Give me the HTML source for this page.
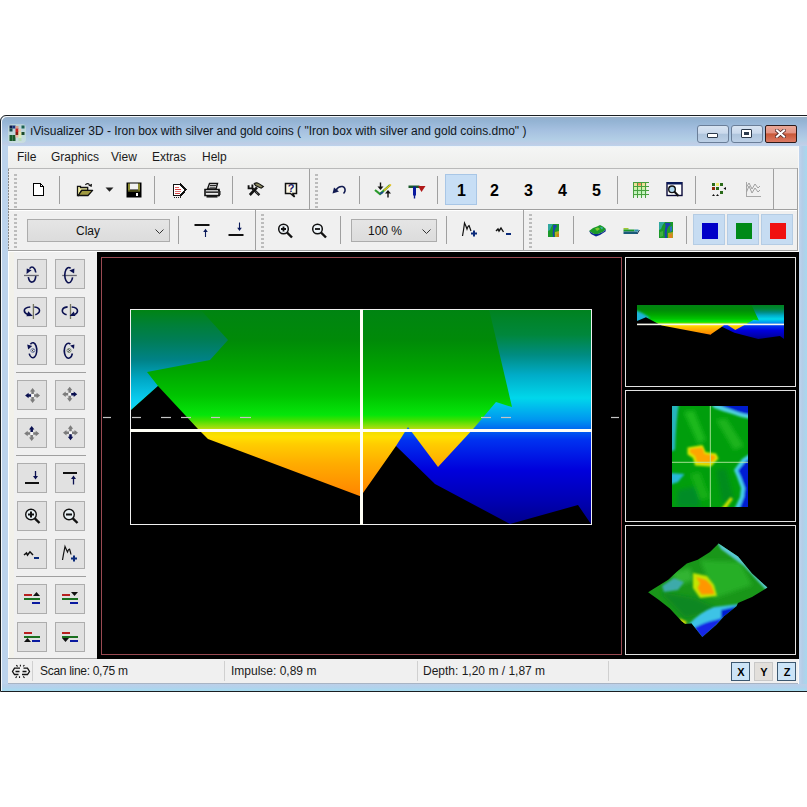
<!DOCTYPE html>
<html><head><meta charset="utf-8">
<style>
*{margin:0;padding:0;box-sizing:border-box}
html,body{width:807px;height:807px;overflow:hidden;background:#fff;font-family:"Liberation Sans",sans-serif;color:#000}
.a{position:absolute}
#win{left:0;top:115px;width:814px;height:577px;border:1px solid #1a1e22;box-shadow:inset 1px 1px 0 #f4f8fc;border-radius:6px 6px 0 0;
 background:linear-gradient(#e8f4f8 0px,#98aec4 1px,#95b2d0 3px,#93b3d3 5px,#a5c0e0 14px,#b3cfe6 24px,#bfcde6 28px,#bcd3ec 30px,#bcd3ec 100%)}
#title{left:30px;top:124px;font-size:12px;color:#101820;white-space:nowrap;letter-spacing:-0.015px}
#client{left:8px;top:146px;width:790px;height:537px;background:#f0f0f0}
.menu{top:150px;font-size:12px;color:#1a1a1a}
.sep{width:1px;background:#a0a0a0}
.tbtxt{font-weight:bold;font-size:16px}
.lb{width:30px;height:30px;border:1px solid #adadad;background:#e1e1e1}
.hsep{height:1px;background:#a0a0a0}
.stat{top:664px;font-size:12px;color:#1a1a1a;white-space:nowrap}
.grip{width:3px;background:repeating-linear-gradient(#bcbcbc 0 2px,transparent 2px 4px)}
</style></head><body>
<div id="win" class="a"></div>

<!-- app icon -->
<svg class="a" style="left:0;top:0" width="30" height="146" viewBox="0 0 30 146">
<rect x="8" y="124" width="18" height="19" rx="4" fill="#d8ecd8" opacity="0.5"/>
<rect x="9.5" y="125.5" width="3" height="3" fill="#0a1848"/><rect x="12.5" y="125.5" width="3" height="3" fill="#18307a"/><rect x="15.5" y="126" width="3" height="2.5" fill="#d8a090"/><rect x="21.5" y="125.5" width="3" height="3" fill="#1a6050"/>
<rect x="9.5" y="128.5" width="3" height="3" fill="#1a4a4a"/><rect x="15.5" y="128.5" width="3" height="3.5" fill="#c82020"/><rect x="18.5" y="129" width="2.5" height="2.5" fill="#e8c8a8"/>
<rect x="15.5" y="132" width="3" height="3" fill="#8a1a10"/><rect x="18.5" y="132" width="3" height="3" fill="#eae4a8"/><rect x="21.5" y="132" width="3" height="3" fill="#1a4a2a"/>
<rect x="9.5" y="135" width="3" height="3" fill="#1a5a2a"/><rect x="12.5" y="135" width="3" height="3" fill="#1a5a2a"/><rect x="15.5" y="135" width="3" height="2.5" fill="#e8b8a8"/><rect x="18.5" y="135" width="3" height="3" fill="#d8ecb8"/>
<rect x="9.5" y="138" width="3" height="3" fill="#1a5a2a"/><rect x="12.5" y="138" width="3" height="3" fill="#1a5a2a"/><rect x="18.5" y="138" width="3" height="3" fill="#b8dcb8"/>
</svg>
<div id="title" class="a">ıVisualizer 3D - Iron box with silver and gold coins ( "Iron box with silver and gold coins.dmo" )</div>
<!-- caption buttons -->
<div class="a" style="left:697px;top:125px;width:32px;height:18px;border:1px solid #6a7e98;border-radius:3px;background:linear-gradient(#d8e4f2 0,#cad9ec 45%,#aec4dc 52%,#bcd0e6 100%)"></div>
<div class="a" style="left:707px;top:133px;width:11px;height:5px;border:1px solid #2c3a4c;background:#fff;border-radius:1px"></div>
<div class="a" style="left:731px;top:125px;width:32px;height:18px;border:1px solid #6a7e98;border-radius:3px;background:linear-gradient(#d8e4f2 0,#cad9ec 45%,#aec4dc 52%,#bcd0e6 100%)"></div>
<div class="a" style="left:741px;top:129px;width:11px;height:9px;border:1px solid #2c3a4c;background:#fff;border-radius:1px"></div>
<div class="a" style="left:744px;top:132px;width:5px;height:3px;background:#2c3a4c"></div>
<div class="a" style="left:765px;top:125px;width:32px;height:18px;border:1px solid #2c1a1a;border-radius:2px;background:linear-gradient(#eaa898 0,#e49484 42%,#c85838 50%,#dc7a64 100%)"></div>
<svg class="a" style="left:775px;top:129px" width="11" height="9" viewBox="0 0 11 9"><path d="M2 1.5 L9 7.5 M9 1.5 L2 7.5" stroke="#4a2020" stroke-width="3.6" stroke-linecap="square"/><path d="M2 1.5 L9 7.5 M9 1.5 L2 7.5" stroke="#fff" stroke-width="2.2" stroke-linecap="square"/></svg>

<div class="a" style="left:799px;top:146px;width:8px;height:545px;background:linear-gradient(90deg,#c0d4ec,#b4cde8 40%,#a6d8ee 100%)"></div>
<div class="a" style="left:2px;top:684px;width:805px;height:7px;background:linear-gradient(#bccfe8,#b2d2ec 50%,#a4dcf0)"></div>
<div class="a" style="left:8px;top:682px;width:790px;height:1px;background:#fafafa"></div>
<div id="client" class="a"></div>
<!-- menu bar -->
<div class="a" style="left:8px;top:146px;width:790px;height:22px;background:linear-gradient(#ecf3fa 0,#f4f5f4 2px,#eeeeec 100%)"></div>
<div class="a menu" style="left:17px">File</div>
<div class="a menu" style="left:51px">Graphics</div>
<div class="a menu" style="left:111px">View</div>
<div class="a menu" style="left:152px">Extras</div>
<div class="a menu" style="left:202px">Help</div>
<div class="a" style="left:8px;top:168px;width:790px;height:1px;background:#b9b9b9"></div>
<!-- rebar rows -->
<div class="a" style="left:8px;top:169px;width:790px;height:40px;background:#f0f0f0"></div>
<div class="a" style="left:8px;top:209px;width:790px;height:1px;background:#a0a0a0"></div>
<div class="a" style="left:8px;top:210px;width:790px;height:1px;background:#fff"></div>
<div class="a" style="left:8px;top:250px;width:790px;height:1px;background:#a0a0a0"></div>
<div class="a" style="left:8px;top:251px;width:790px;height:1px;background:#fff"></div>
<!-- band borders -->
<div class="a" style="left:309px;top:169px;width:1px;height:40px;background:#a0a0a0"></div>
<div class="a" style="left:773px;top:169px;width:1px;height:40px;background:#a0a0a0"></div>
<div class="a" style="left:255px;top:210px;width:1px;height:40px;background:#a0a0a0"></div>
<div class="a" style="left:523px;top:210px;width:1px;height:40px;background:#a0a0a0"></div>
<div class="a" style="left:797px;top:168px;width:1px;height:82px;background:#a0a0a0"></div>
<div class="a" style="left:798px;top:146px;width:1px;height:106px;background:#f8f8f8"></div>
<div class="a" style="left:798px;top:658px;width:1px;height:26px;background:#f8f8f8"></div>
<div class="a grip" style="left:14px;top:174px;height:34px"></div>
<div class="a grip" style="left:315px;top:174px;height:34px"></div>
<div class="a grip" style="left:14px;top:214px;height:34px"></div>
<div class="a grip" style="left:261px;top:214px;height:34px"></div>
<div class="a grip" style="left:529px;top:214px;height:34px"></div>

<!-- row1 separators -->
<div class="a sep" style="left:59px;top:176px;height:28px"></div>
<div class="a sep" style="left:154px;top:176px;height:28px"></div>
<div class="a sep" style="left:232px;top:176px;height:28px"></div>
<div class="a sep" style="left:359px;top:176px;height:28px"></div>
<div class="a sep" style="left:437px;top:176px;height:28px"></div>
<div class="a sep" style="left:617px;top:176px;height:28px"></div>
<div class="a sep" style="left:695px;top:176px;height:28px"></div>
<!-- row2 separators -->
<div class="a sep" style="left:178px;top:216px;height:28px"></div>
<div class="a sep" style="left:340px;top:216px;height:28px"></div>
<div class="a sep" style="left:446px;top:216px;height:28px"></div>
<div class="a sep" style="left:573px;top:216px;height:28px"></div>
<div class="a sep" style="left:686px;top:216px;height:28px"></div>


<!-- ROW1 ICONS -->
<svg class="a" style="left:32px;top:182px" width="14" height="16" viewBox="0 0 14 16" shape-rendering="crispEdges">
<path d="M1.5 1.5 H8.5 L11.5 4.5 V13.5 H1.5 Z" fill="#fff" stroke="#000" stroke-width="1.3"/>
<path d="M8.5 1.5 V4.5 H11.5" fill="none" stroke="#000" stroke-width="1"/></svg>
<svg class="a" style="left:76px;top:182px" width="18" height="15" viewBox="0 0 18 15">
<path d="M1.5 13.5 V4.3 H4.5 V5.5 H11.7 V8.5 H5.5 L2.5 13.5 Z" fill="#f2eea0" stroke="#111" stroke-width="1.3"/>
<path d="M2.2 13.5 L5.8 8.4 H16.6 L12 13.5 Z" fill="#a09a40" stroke="#111" stroke-width="1.3" stroke-linejoin="round"/>
<path d="M9.4 2.8 Q11.2 0.4 13.6 2.6" fill="none" stroke="#111" stroke-width="1.2"/>
<path d="M12.2 3.6 L16 1.8 L15.6 5 Z" fill="#111"/></svg>
<svg class="a" style="left:105px;top:187px" width="9" height="6"><path d="M0.5 0.5 H8.5 L4.5 4.8 Z" fill="#222"/></svg>
<svg class="a" style="left:126px;top:182px" width="16" height="16" viewBox="0 0 16 16">
<rect x="0.5" y="0.5" width="15" height="15" fill="#000"/>
<rect x="2" y="1.5" width="2" height="7" fill="#8a8a30"/>
<rect x="12" y="1.5" width="2" height="7" fill="#8a8a30"/>
<rect x="4" y="1.5" width="8" height="6" fill="#f2f2f2"/>
<rect x="2" y="8.5" width="12" height="1" fill="#8a8a30"/>
<rect x="10" y="11" width="2" height="3" fill="#fff"/></svg>
<svg class="a" style="left:172px;top:183px" width="16" height="16" viewBox="0 0 16 16" shape-rendering="crispEdges">
<path d="M1.5 1.5 H8.5 L13.5 6.5 L9 12.5 H1.5 Z" fill="#fff" stroke="#111" stroke-width="1.5"/>
<path d="M8 1 L13.8 6.5 L8.5 13" fill="none" stroke="#111" stroke-width="2"/>
<rect x="3" y="3.5" width="4" height="1" fill="#e06060"/>
<rect x="3" y="5.5" width="6" height="1" fill="#d04040"/>
<rect x="3" y="7.5" width="6" height="1" fill="#e07070"/>
<rect x="3" y="9.5" width="5" height="1" fill="#d04040"/>
<rect x="2" y="14" width="1" height="1" fill="#222"/><rect x="4" y="14" width="1" height="1" fill="#222"/><rect x="6" y="14" width="1" height="1" fill="#222"/><rect x="8" y="13" width="1" height="2" fill="#222"/>
</svg>
<svg class="a" style="left:203px;top:182px" width="18" height="16" viewBox="0 0 18 16">
<path d="M6.5 1.5 H14.5 L13 7 H4.5 Z" fill="#fff" stroke="#111" stroke-width="1.4"/>
<path d="M7 3.5 H13 M6.5 5.2 H12.5" stroke="#111" stroke-width="0.9"/>
<path d="M2 7.5 H16 V13.5 H2 Z" fill="#fff" stroke="#111" stroke-width="1.6"/>
<rect x="2" y="9.3" width="14" height="1.8" fill="#333"/>
<path d="M3.5 14.8 H14.5" stroke="#111" stroke-width="1.5"/>
<path d="M15 8 L17 9 V13 L15 14" fill="none" stroke="#111" stroke-width="1"/>
</svg>
<svg class="a" style="left:247px;top:182px" width="18" height="15" viewBox="0 0 18 15">
<path d="M5.6 6.6 L12.4 13.2" stroke="#111" stroke-width="2.4"/>
<path d="M6.2 7.2 L11.8 12.6" stroke="#ddd" stroke-width="0.7" stroke-dasharray="1 1"/>
<path d="M1.6 3.2 V6.4 H5.4 V2.6" fill="none" stroke="#111" stroke-width="1.9"/>
<path d="M10 5.4 L2.8 13" stroke="#111" stroke-width="2.6"/>
<path d="M7.2 1.6 Q9.5 0.2 11.5 1.4 L16.4 4.6 L14.2 6.2 L10.5 4.4 L8.5 3.6 Z" fill="#8c8a60" stroke="#111" stroke-width="1.1"/>
</svg>
<svg class="a" style="left:284px;top:182px" width="14" height="16" viewBox="0 0 14 16">
<path d="M1.5 1.5 H12.5 V11.5 H9 L10.5 15 L6.5 11.5 H1.5 Z" fill="#fbf8e8" stroke="#111" stroke-width="1.5"/>
<text x="7" y="10.3" font-family="Liberation Sans" font-weight="bold" font-size="11" text-anchor="middle" fill="#1a1a6a">?</text></svg>
<svg class="a" style="left:331px;top:184px" width="16" height="11" viewBox="0 0 16 11">
<path d="M5 6 Q7.5 2 11.5 2.5 Q14.5 3.5 14 7 Q13.5 8.5 12.5 9.5" fill="none" stroke="#111a50" stroke-width="1.6"/>
<path d="M1.5 9.5 L3 3.5 L8 7.5 Z" fill="#111a50"/></svg>
<svg class="a" style="left:374px;top:182px" width="19" height="16" viewBox="0 0 19 16">
<path d="M1 8 L6 12 L16 3" fill="none" stroke="#2a9a2a" stroke-width="2.2"/>
<path d="M10 8.5 L17 2.5" fill="none" stroke="#e8c020" stroke-width="1.6"/>
<path d="M6 12 L9 10" stroke="#1a4a8a" stroke-width="2"/>
<path d="M6.5 0.5 V6" stroke="#111" stroke-width="1.4"/><path d="M3.5 4.5 L6.5 8 L9.5 4.5 Z" fill="#111"/>
<path d="M14 15.5 V10" stroke="#111" stroke-width="1.4"/><path d="M11 11.5 L14 8 L17 11.5 Z" fill="#111"/></svg>
<svg class="a" style="left:408px;top:185px" width="18" height="14" viewBox="0 0 18 14">
<rect x="0.5" y="0.5" width="11" height="2.5" fill="#1a5a2a"/>
<rect x="5" y="1.5" width="3" height="9" fill="#0a1aa0"/>
<path d="M6.5 10 V13.5" stroke="#0a1a8a" stroke-width="1.4"/>
<path d="M10 1 H17.5 L13.5 7 Z" fill="#b01818"/></svg>


<svg class="a" style="left:632px;top:181px" width="18" height="18" viewBox="0 0 18 18">
<defs><linearGradient id="gg" x1="0" y1="0" x2="0" y2="1"><stop offset="0" stop-color="#f8d090"/><stop offset="0.3" stop-color="#e8f0a0"/><stop offset="0.55" stop-color="#b8f0b0"/><stop offset="1" stop-color="#d8f8d0"/></linearGradient></defs>
<rect x="1.5" y="1.5" width="13" height="14" fill="url(#gg)"/>
<rect x="5.5" y="1.5" width="4" height="3" fill="#f09058"/>
<path d="M1.5 1 V17 M5.5 1 V17 M9.5 1 V17 M13.5 1 V17" stroke="#48a040" stroke-width="1"/>
<path d="M1 1.5 H17 M1 5.5 H17 M1 9.5 H17 M1 13.5 H17" stroke="#48a040" stroke-width="1"/>
</svg>
<svg class="a" style="left:666px;top:182px" width="17" height="16" viewBox="0 0 17 16">
<rect x="1" y="0.5" width="15" height="13" fill="#fff" stroke="#0a0a3a" stroke-width="1.4"/>
<rect x="1" y="0" width="15" height="2.5" fill="#0a1a5a"/>
<circle cx="6" cy="7.3" r="3.3" fill="#b0d8f0" stroke="#111" stroke-width="1.4"/>
<path d="M8.5 9.8 L12.5 14" stroke="#111" stroke-width="2"/></svg>
<svg class="a" style="left:711px;top:182px" width="16" height="16" viewBox="0 0 16 16">
<rect x="1" y="1" width="3" height="3" fill="#2a6a1a"/><rect x="5" y="1" width="3" height="3" fill="#f0f070"/><rect x="9" y="1" width="3" height="3" fill="#2a6a1a"/>
<rect x="1" y="5" width="3" height="3" fill="#8a2a0a"/><rect x="5" y="5" width="3" height="3" fill="#2a6a1a"/>
<rect x="9" y="9" width="3" height="3" fill="#2a6a1a"/>
<path d="M15 5 L12.5 6.5 L15 8 Z" fill="#111"/>
<path d="M1 14 L2.5 12 L4 14 Z M5 14 L6.5 12 L8 14 Z" fill="#111"/></svg>
<svg class="a" style="left:745px;top:181px" width="17" height="17" viewBox="0 0 17 17">
<path d="M1.5 1 V16 M1 15.5 H16" stroke="#a8a8a8" stroke-width="1"/>
<path d="M1.5 6 L4 2 L7 8 L10 3 L13 7 L15 5" fill="none" stroke="#a0a0a0" stroke-width="1"/>
<path d="M1.5 11 L4 5 L7 12 L10 7 L13 11 L15 9" fill="none" stroke="#a0a0a0" stroke-width="1"/></svg>
<!-- ROW2 ICONS -->
<svg class="a" style="left:194px;top:222px" width="16" height="16" viewBox="0 0 16 16">
<rect x="0.5" y="2" width="15" height="2" fill="#111"/>
<path d="M11.5 9 V15" stroke="#0a1a5a" stroke-width="1.1"/><path d="M9.2 10 L11.5 6.8 L13.8 10 Z" fill="#0a1a5a"/></svg>
<svg class="a" style="left:228px;top:222px" width="16" height="16" viewBox="0 0 16 16">
<rect x="0.5" y="12" width="15" height="2" fill="#111"/>
<path d="M11.5 0.5 V6.5" stroke="#0a1a5a" stroke-width="1.1"/><path d="M9.2 5.8 L11.5 9 L13.8 5.8 Z" fill="#0a1a5a"/></svg>
<svg class="a" style="left:277px;top:222px" width="17" height="17" viewBox="0 0 17 17">
<circle cx="6.5" cy="7" r="4.8" fill="#eef4f8" stroke="#111" stroke-width="1.5"/>
<path d="M4 7 H9 M6.5 4.5 V9.5" stroke="#111" stroke-width="1.8"/>
<path d="M10 10.5 L15 15.5" stroke="#111" stroke-width="2.4"/></svg>
<svg class="a" style="left:311px;top:222px" width="17" height="17" viewBox="0 0 17 17">
<circle cx="6.5" cy="7" r="4.8" fill="#eef4f8" stroke="#111" stroke-width="1.5"/>
<path d="M4 7 H9" stroke="#111" stroke-width="1.8"/>
<path d="M10 10.5 L15 15.5" stroke="#111" stroke-width="2.4"/></svg>
<svg class="a" style="left:461px;top:221px" width="18" height="17" viewBox="0 0 18 17">
<path d="M1.5 15 Q2.5 10 3.5 2 Q5 5 6 8 Q7 5 8 4.5 Q9 7 10 10" fill="none" stroke="#111" stroke-width="1.2"/>
<path d="M10 12.5 H16 M13 9.5 V15.5" stroke="#0a2a7a" stroke-width="2"/></svg>
<svg class="a" style="left:495px;top:226px" width="18" height="11" viewBox="0 0 18 11">
<path d="M1 5 L3 3 L4 5 L6 2 L8.5 6" fill="none" stroke="#111" stroke-width="1.4"/>
<path d="M11 8 H16" stroke="#0a2a7a" stroke-width="2"/></svg>
<svg class="a" style="left:548px;top:224px" width="11" height="13" viewBox="0 0 11 13">
<rect x="0" y="0" width="11" height="13" fill="#1a9a2a"/>
<path d="M0 0 H5 Q3 3 2 6 L0 7 Z" fill="#30a8a0"/>
<path d="M5 1 Q8 0 9 2 Q7 4 6.5 7 Q6 10 6.5 13 H5 Q4.3 9 5 6 Q5.5 3 5 1 Z" fill="#1a40b0"/>
<path d="M7 8 L11 7 V13 H7 Z" fill="#b0b020"/>
<path d="M8.5 10 L11 9.5 V13 H9 Z" fill="#d08020"/></svg>
<svg class="a" style="left:588px;top:224px" width="19" height="13" viewBox="0 0 19 13">
<path d="M1 7 L5 4 L9 2.5 L12 1 L15 2.5 L18 5 L15 8 L10 10 L6 10 Z" fill="#1a9a2a"/>
<path d="M1 7 L6 10 L10 10 L15 8 L18 5 L17.5 7.5 L12 11 L8 12.5 L3 10 Z" fill="#0a2a90"/>
<path d="M7 4.5 L10 3.5 L12 5 L9 7 Z" fill="#80c830"/>
<path d="M12 3 L15 3.5 L14 5.5 Z" fill="#40b0c0"/></svg>
<svg class="a" style="left:623px;top:228px" width="17" height="7" viewBox="0 0 17 7">
<rect x="0.5" y="0" width="5" height="1.5" fill="#a0c830"/>
<rect x="0.5" y="1.5" width="11" height="2" fill="#1a9a2a"/>
<rect x="0.5" y="3.5" width="14" height="2.5" fill="#1a5a7a"/>
<rect x="11.5" y="1.5" width="4" height="2" fill="#3090b0"/>
<path d="M14 6 L16.5 2" stroke="#1a3a5a" stroke-width="1"/></svg>
<svg class="a" style="left:659px;top:222px" width="14" height="16" viewBox="0 0 14 16">
<rect x="0" y="0" width="14" height="16" fill="#1a9a2a"/>
<path d="M0 0 H6 Q3 3 2 7 L0 8 Z" fill="#30a8a0"/>
<path d="M6 1 Q10 0 12 2 Q9 4 8 8 Q7.5 12 8 16 H6 Q5 11 6 7 Q7 3 6 1 Z" fill="#1a40b0"/>
<path d="M11 5 L13 4 L13 9 L11 10 Z" fill="#2a70c0"/>
<path d="M9 11 L14 10 V16 H9 Z" fill="#b0a020"/>
<path d="M10 13 L13 12 V16 H11 Z" fill="#e08020"/>
<path d="M1 10 L4 9 L4 14 L1 15 Z" fill="#40b040"/></svg>

<!-- numbered buttons -->
<div class="a" style="left:445px;top:174px;width:32px;height:31px;background:#c7def5;border:1px solid #a8c6e6"></div>
<div class="a tbtxt" style="left:457px;top:182px">1</div>
<div class="a tbtxt" style="left:490px;top:182px">2</div>
<div class="a tbtxt" style="left:524px;top:182px">3</div>
<div class="a tbtxt" style="left:558px;top:182px">4</div>
<div class="a tbtxt" style="left:592px;top:182px">5</div>

<!-- combos -->
<div class="a" style="left:27px;top:219px;width:143px;height:23px;border:1px solid #acacac;background:linear-gradient(#e5e5e5,#dcdcdc)"></div>
<div class="a" style="left:76px;top:224px;font-size:12px;color:#111">Clay</div>
<svg class="a" style="left:155px;top:229px" width="9" height="6"><path d="M0.5 0.5 L4.5 4.5 L8.5 0.5" fill="none" stroke="#333" stroke-width="1"/></svg>
<div class="a" style="left:351px;top:219px;width:86px;height:23px;border:1px solid #acacac;background:linear-gradient(#e5e5e5,#dcdcdc)"></div>
<div class="a" style="left:368px;top:224px;font-size:12px;color:#111">100 %</div>
<svg class="a" style="left:422px;top:229px" width="9" height="6"><path d="M0.5 0.5 L4.5 4.5 L8.5 0.5" fill="none" stroke="#333" stroke-width="1"/></svg>

<!-- color buttons -->
<div class="a" style="left:693px;top:214px;width:32px;height:31px;background:#c6dcf2;border:1px solid #b4cce4"></div>
<div class="a" style="left:727px;top:214px;width:32px;height:31px;background:#c6dcf2;border:1px solid #b4cce4"></div>
<div class="a" style="left:761px;top:214px;width:32px;height:31px;background:#c6dcf2;border:1px solid #b4cce4"></div>
<div class="a" style="left:702px;top:223px;width:16px;height:16px;background:#0000c8"></div>
<div class="a" style="left:736px;top:223px;width:16px;height:16px;background:#008a18"></div>
<div class="a" style="left:770px;top:223px;width:16px;height:16px;background:#f01010"></div>

<!-- left panel -->
<div class="a" style="left:8px;top:252px;width:89px;height:407px;background:#f0f0f0"></div>
<div class="a lb" style="left:17px;top:259px"></div>
<div class="a lb" style="left:55px;top:259px"></div>
<div class="a lb" style="left:17px;top:297px"></div>
<div class="a lb" style="left:55px;top:297px"></div>
<div class="a lb" style="left:17px;top:335px"></div>
<div class="a lb" style="left:55px;top:335px"></div>
<div class="a lb" style="left:17px;top:380px"></div>
<div class="a lb" style="left:55px;top:380px"></div>
<div class="a lb" style="left:17px;top:418px"></div>
<div class="a lb" style="left:55px;top:418px"></div>
<div class="a lb" style="left:17px;top:463px"></div>
<div class="a lb" style="left:55px;top:463px"></div>
<div class="a lb" style="left:17px;top:501px"></div>
<div class="a lb" style="left:55px;top:501px"></div>
<div class="a lb" style="left:17px;top:539px"></div>
<div class="a lb" style="left:55px;top:539px"></div>
<div class="a lb" style="left:17px;top:584px"></div>
<div class="a lb" style="left:55px;top:584px"></div>
<div class="a lb" style="left:17px;top:622px"></div>
<div class="a lb" style="left:55px;top:622px"></div>
<div class="a hsep" style="left:16px;top:372px;width:70px"></div>
<div class="a hsep" style="left:16px;top:455px;width:70px"></div>
<div class="a hsep" style="left:16px;top:576px;width:70px"></div>
<svg class="a" style="left:17px;top:259px" width="30" height="30" viewBox="0 0 30 30"><path d="M7 16.5 H21.8" stroke="#6a6a72" stroke-width="1.3"/><path d="M12.6 9.6 A3.9 7.3 0 0 1 18.8 13.5" fill="none" stroke="#0a1050" stroke-width="1.6"/><path d="M11.3 18.2 A3.9 7.3 0 0 0 18.8 17.2" fill="none" stroke="#0a1050" stroke-width="1.6"/><path d="M9.5 15 L9.8 9.6 L14.6 11.3 Z" fill="#0a1050"/></svg>
<svg class="a" style="left:55px;top:259px" width="30" height="30" viewBox="0 0 30 30"><path d="M7.2 16.5 H21.8" stroke="#6a6a72" stroke-width="1.3"/><path d="M15.6 9.4 A4 7.6 0 1 0 17.6 18.4" fill="none" stroke="#0a1050" stroke-width="1.6"/><path d="M14.3 11.6 L19.4 9.6 L19.1 14.6 Z" fill="#0a1050"/></svg>
<svg class="a" style="left:17px;top:297px" width="30" height="30" viewBox="0 0 30 30"><path d="M16.4 7 V22" stroke="#74745e" stroke-width="1.3"/><path d="M13.3 10 Q7.2 10.5 7.3 13.8 Q7.6 16.3 11 17.6" fill="none" stroke="#0a1050" stroke-width="1.6"/><path d="M9.4 19.3 L11.3 14.2 L15.8 19 Z" fill="#0a1050"/><path d="M17.3 10 Q22.6 10.5 22.5 13.8 Q22.3 16.4 18.3 17.8" fill="none" stroke="#0a1050" stroke-width="1.6"/></svg>
<svg class="a" style="left:55px;top:297px" width="30" height="30" viewBox="0 0 30 30"><path d="M15.5 7 V22" stroke="#74745e" stroke-width="1.3"/><path d="M12.6 9.9 Q7.2 10.5 7.3 14 Q7.6 16.6 11.6 17.8" fill="none" stroke="#0a1050" stroke-width="1.6"/><path d="M16.7 10 Q22.6 10.5 22.5 14 Q22.3 16.5 19.5 17.4" fill="none" stroke="#0a1050" stroke-width="1.6"/><path d="M14.6 19.1 L18.8 14.6 L20.4 18.9 Z" fill="#0a1050"/></svg>
<svg class="a" style="left:17px;top:335px" width="30" height="30" viewBox="0 0 30 30"><path d="M13.4 9.2 A4 7.5 0 1 1 12.2 18.6" fill="none" stroke="#0a1050" stroke-width="1.6"/><path d="M10.2 9.4 L15.2 11 L11.2 14.6 Z" fill="#0a1050"/><circle cx="15.8" cy="15.5" r="2" fill="#f0f0f8" stroke="#6070a0" stroke-width="0.9"/><path d="M16.6 14.5 L15 15.5 L16.6 16.5" fill="none" stroke="#222" stroke-width="0.9"/></svg>
<svg class="a" style="left:55px;top:335px" width="30" height="30" viewBox="0 0 30 30"><path d="M15.4 9.1 A4.2 7.5 0 1 0 17.4 18.5" fill="none" stroke="#0a1050" stroke-width="1.6"/><path d="M15.2 10.6 L19.4 9.6 L19 14 Z" fill="#0a1050"/><circle cx="14" cy="15.5" r="2" fill="#f0f0f8" stroke="#6a7a60" stroke-width="0.9"/><path d="M13.2 14.5 L14.8 15.5 L13.2 16.5" fill="none" stroke="#222" stroke-width="0.9"/></svg>
<svg class="a" style="left:17px;top:380px" width="30" height="30" viewBox="0 0 30 30"><rect x="14.1" y="14.0" width="3" height="3" fill="#f8f8f8"/><path d="M8.1 15.5 L11.6 12.8 V14.25 H14.1 V16.75 H11.6 V18.2 Z" fill="#0a1050"/><path d="M23.1 15.5 L19.6 12.8 V14.25 H17.1 V16.75 H19.6 V18.2 Z" fill="#7c7c7c"/><path d="M15.6 8.0 L12.899999999999999 11.5 H14.35 V14.0 H16.85 V11.5 H18.3 Z" fill="#7c7c7c"/><path d="M15.6 23.0 L12.899999999999999 19.5 H14.35 V17.0 H16.85 V19.5 H18.3 Z" fill="#7c7c7c"/></svg>
<svg class="a" style="left:55px;top:380px" width="30" height="30" viewBox="0 0 30 30"><rect x="13.2" y="12.8" width="3" height="3" fill="#f8f8f8"/><path d="M7.199999999999999 14.3 L10.7 11.600000000000001 V13.05 H13.2 V15.55 H10.7 V17.0 Z" fill="#7c7c7c"/><path d="M22.2 14.3 L18.7 11.600000000000001 V13.05 H16.2 V15.55 H18.7 V17.0 Z" fill="#0a1050"/><path d="M14.7 6.800000000000001 L12.0 10.3 H13.45 V12.8 H15.95 V10.3 H17.4 Z" fill="#7c7c7c"/><path d="M14.7 21.8 L12.0 18.3 H13.45 V15.8 H15.95 V18.3 H17.4 Z" fill="#7c7c7c"/></svg>
<svg class="a" style="left:17px;top:418px" width="30" height="30" viewBox="0 0 30 30"><rect x="13.2" y="14.0" width="3" height="3" fill="#f8f8f8"/><path d="M7.199999999999999 15.5 L10.7 12.8 V14.25 H13.2 V16.75 H10.7 V18.2 Z" fill="#7c7c7c"/><path d="M22.2 15.5 L18.7 12.8 V14.25 H16.2 V16.75 H18.7 V18.2 Z" fill="#7c7c7c"/><path d="M14.7 8.0 L12.0 11.5 H13.45 V14.0 H15.95 V11.5 H17.4 Z" fill="#0a1050"/><path d="M14.7 23.0 L12.0 19.5 H13.45 V17.0 H15.95 V19.5 H17.4 Z" fill="#7c7c7c"/></svg>
<svg class="a" style="left:55px;top:418px" width="30" height="30" viewBox="0 0 30 30"><rect x="14.0" y="13.2" width="3" height="3" fill="#f8f8f8"/><path d="M8.0 14.7 L11.5 12.0 V13.45 H14.0 V15.95 H11.5 V17.4 Z" fill="#7c7c7c"/><path d="M23.0 14.7 L19.5 12.0 V13.45 H17.0 V15.95 H19.5 V17.4 Z" fill="#7c7c7c"/><path d="M15.5 7.199999999999999 L12.8 10.7 H14.25 V13.2 H16.75 V10.7 H18.2 Z" fill="#7c7c7c"/><path d="M15.5 22.2 L12.8 18.7 H14.25 V16.2 H16.75 V18.7 H18.2 Z" fill="#0a1050"/></svg>
<svg class="a" style="left:17px;top:463px" width="30" height="30" viewBox="0 0 30 30"><rect x="8" y="19" width="14" height="2" fill="#111"/><path d="M18.5 8 V14" stroke="#0a1050" stroke-width="1.3"/><path d="M16 13 L18.5 16.5 L21 13 Z" fill="#0a1050"/></svg>
<svg class="a" style="left:55px;top:463px" width="30" height="30" viewBox="0 0 30 30"><rect x="8" y="9" width="14" height="2" fill="#111"/><path d="M18.5 15 V21.5" stroke="#0a1050" stroke-width="1.3"/><path d="M16 16 L18.5 12.5 L21 16 Z" fill="#0a1050"/></svg>
<svg class="a" style="left:17px;top:501px" width="30" height="30" viewBox="0 0 30 30"><circle cx="14" cy="13.5" r="5.3" fill="#e8f0f4" stroke="#111" stroke-width="1.4"/><path d="M11 13.5 H17 M14 10.5 V16.5" stroke="#111" stroke-width="2"/><path d="M17.8 17.3 L22.5 22" stroke="#111" stroke-width="2.4"/></svg>
<svg class="a" style="left:55px;top:501px" width="30" height="30" viewBox="0 0 30 30"><circle cx="14" cy="13.5" r="5.3" fill="#e8f0f4" stroke="#111" stroke-width="1.4"/><path d="M11 13.5 H17" stroke="#111" stroke-width="2"/><path d="M17.8 17.3 L22.5 22" stroke="#111" stroke-width="2.4"/></svg>
<svg class="a" style="left:17px;top:539px" width="30" height="30" viewBox="0 0 30 30"><path d="M7 16 L9.5 14 L10.5 16 L13 12.8 L16 16" fill="none" stroke="#111" stroke-width="1.5"/><path d="M17 19 H22" stroke="#0a2a7a" stroke-width="2"/></svg>
<svg class="a" style="left:55px;top:539px" width="30" height="30" viewBox="0 0 30 30"><path d="M7.5 21 Q8.5 15 10 7.5 Q11.5 11 12.5 13 Q13.5 10 14.5 10 Q15.5 13 16 15.5" fill="none" stroke="#111" stroke-width="1.2"/><path d="M16 19.5 H22 M19 16.5 V22.5" stroke="#0a2a7a" stroke-width="2"/></svg>
<svg class="a" style="left:17px;top:584px" width="30" height="30" viewBox="0 0 30 30"><rect x="7" y="10" width="8" height="2" fill="#b82020"/><rect x="7" y="14" width="16" height="2" fill="#1a7020"/><rect x="15" y="18" width="8" height="2" fill="#0a1aa0"/><path d="M16 12 L19.5 8 L23 12 Z" fill="#111"/></svg>
<svg class="a" style="left:55px;top:584px" width="30" height="30" viewBox="0 0 30 30"><rect x="7" y="10" width="8" height="2" fill="#b82020"/><rect x="7" y="14" width="16" height="2" fill="#1a7020"/><rect x="15" y="18" width="8" height="2" fill="#0a1aa0"/><path d="M16 8 L19.5 12 L23 8 Z" fill="#111"/></svg>
<svg class="a" style="left:17px;top:622px" width="30" height="30" viewBox="0 0 30 30"><rect x="7" y="10" width="8" height="2" fill="#b82020"/><rect x="7" y="14" width="16" height="2" fill="#1a7020"/><rect x="15" y="18" width="8" height="2" fill="#0a1aa0"/><path d="M7 20 L10.5 16 L14 20 Z" fill="#111"/></svg>
<svg class="a" style="left:55px;top:622px" width="30" height="30" viewBox="0 0 30 30"><rect x="7" y="10" width="8" height="2" fill="#b82020"/><rect x="7" y="14" width="16" height="2" fill="#1a7020"/><rect x="15" y="18" width="8" height="2" fill="#0a1aa0"/><path d="M7 16 L10.5 20 L14 16 Z" fill="#111"/></svg>

<div class="a" style="left:8px;top:169px;width:1px;height:81px;background:repeating-linear-gradient(#8a8a8a 0 2px,#d8d8d8 2px 3px)"></div>
<div class="a" style="left:8px;top:252px;width:1px;height:406px;background:#fff"></div>
<div class="a" style="left:9px;top:252px;width:5px;height:406px;background:#f2f1ea"></div>
<!-- black view area -->
<div class="a" style="left:97px;top:252px;width:702px;height:407px;background:#000"></div>
<div class="a" style="left:101px;top:257px;width:521px;height:398px;border:1px solid #9a4a52"></div>
<div class="a" style="left:625px;top:257px;width:171px;height:130px;border:1px solid #e2e2e2"></div>
<div class="a" style="left:625px;top:390px;width:171px;height:132px;border:1px solid #e2e2e2"></div>
<div class="a" style="left:625px;top:525px;width:171px;height:130px;border:1px solid #e2e2e2"></div>


<svg class="a" style="left:0;top:0" width="807" height="807" viewBox="0 0 807 807">
<defs>
<linearGradient id="gA" gradientUnits="userSpaceOnUse" x1="0" y1="309" x2="0" y2="524">
<stop offset="0" stop-color="rgb(0,132,18)"/>
<stop offset="0.144" stop-color="rgb(0,138,8)"/>
<stop offset="0.284" stop-color="rgb(0,165,0)"/>
<stop offset="0.40" stop-color="rgb(0,195,0)"/>
<stop offset="0.493" stop-color="rgb(5,230,10)"/>
<stop offset="0.516" stop-color="rgb(60,225,0)"/>
<stop offset="0.553" stop-color="rgb(165,222,15)"/>
<stop offset="0.567" stop-color="rgb(240,220,0)"/>
<stop offset="0.595" stop-color="rgb(255,225,0)"/>
<stop offset="0.628" stop-color="rgb(255,205,0)"/>
<stop offset="0.72" stop-color="rgb(255,172,0)"/>
<stop offset="0.84" stop-color="rgb(255,140,0)"/>
<stop offset="1" stop-color="rgb(255,110,0)"/>
</linearGradient>
<linearGradient id="gC" gradientUnits="userSpaceOnUse" x1="0" y1="309" x2="0" y2="411">
<stop offset="0" stop-color="rgb(0,132,18)"/>
<stop offset="0.15" stop-color="rgb(0,128,55)"/>
<stop offset="0.30" stop-color="rgb(0,125,85)"/>
<stop offset="0.50" stop-color="rgb(0,130,135)"/>
<stop offset="0.70" stop-color="rgb(0,170,200)"/>
<stop offset="0.89" stop-color="rgb(10,205,240)"/>
<stop offset="1" stop-color="rgb(20,212,245)"/>
</linearGradient>
<linearGradient id="gB" gradientUnits="userSpaceOnUse" x1="0" y1="309" x2="0" y2="524">
<stop offset="0" stop-color="rgb(0,130,30)"/>
<stop offset="0.12" stop-color="rgb(0,135,60)"/>
<stop offset="0.214" stop-color="rgb(0,140,130)"/>
<stop offset="0.307" stop-color="rgb(0,172,200)"/>
<stop offset="0.414" stop-color="rgb(0,215,235)"/>
<stop offset="0.516" stop-color="rgb(0,150,240)"/>
<stop offset="0.609" stop-color="rgb(0,50,240)"/>
<stop offset="0.749" stop-color="rgb(0,0,220)"/>
<stop offset="0.888" stop-color="rgb(0,0,180)"/>
<stop offset="1" stop-color="rgb(0,0,140)"/>
</linearGradient>
<g id="scan">
<rect x="130" y="309" width="461" height="215" fill="url(#gA)"/>
<path d="M489 309 H591 V524 H396 V446 L408 427 L438 467 L474 428 L496 402 L512 407 Z" fill="url(#gB)"/>
<path d="M130 309 H200 L228 340 L210 360 L147 372 L158 386 L130 411 Z" fill="url(#gC)"/>
<path d="M130 411 L158 386 L198 429 L208 439 L361 496.5 L363 493 L396 446 L435 484 L510 524 L578 505 L591 524 H130 Z" fill="#000"/>
</g>
</defs>
<use href="#scan"/>
<g fill="#c4c4c4">
<rect x="103" y="416.9" width="8" height="1.2"/><rect x="132" y="416.9" width="9" height="1.2"/><rect x="161" y="416.9" width="10" height="1.2"/>
<rect x="181" y="416.9" width="10" height="1.2"/><rect x="211" y="416.9" width="9" height="1.2"/><rect x="240" y="416.9" width="11" height="1.2"/>
<rect x="481" y="416.9" width="10" height="1.2"/><rect x="501" y="416.9" width="10" height="1.2"/><rect x="611" y="416.9" width="8" height="1.2"/>
</g>
<rect x="130.5" y="309.5" width="461" height="215" fill="none" stroke="#f0f0f0" stroke-width="1"/>
<rect x="130" y="429" width="462" height="3" fill="#fffff6"/>
<rect x="360" y="309" width="3" height="216" fill="#fffff6"/>
<!-- thumbnail 1 -->
<clipPath id="cth"><rect x="637" y="305" width="147" height="35"/></clipPath>
<g clip-path="url(#cth)">
<g transform="translate(637 305) scale(0.319 0.158) translate(-130 -309)">
<rect x="130" y="309" width="461" height="215" fill="url(#gA)"/>
<path d="M489 309 H591 V524 H396 V446 L408 427 L438 467 L474 428 L496 402 L512 407 Z" fill="url(#gB)"/>
</g>
<path d="M634 310 Q642 312 650 318 L646 320 L634 324 Z" fill="rgb(30,180,220)" filter="url(#bl1)"/>
<g transform="translate(637 305) scale(0.319 0.158) translate(-130 -309)">
<path d="M130 411 L158 386 L198 429 L208 439 L361 496.5 L363 493 L396 446 L435 484 L510 524 L578 505 L591 524 H130 Z" fill="#000"/>
</g>
</g>
<rect x="637" y="323.6" width="147" height="1.6" fill="#f8f8f0"/>
<!-- heatmap panel 2 -->
<defs>
<clipPath id="c2"><rect x="672" y="406" width="76" height="101"/></clipPath>
<filter id="bl1" x="-20%" y="-20%" width="140%" height="140%"><feGaussianBlur stdDeviation="1.2"/></filter>
<filter id="bl2" x="-20%" y="-20%" width="140%" height="140%"><feGaussianBlur stdDeviation="2"/></filter>
<clipPath id="c3"><path d="M718.6 543.4 L738 556.6 L752 573.6 L767.4 587.6 L752 597 L738 603 L736.4 606.2 L724 616.2 L716.3 624.7 L702.3 637.1 L691.5 623.2 L685.3 624 L681.4 620.9 L669.8 608.5 L659 600 L648.1 592.2 L668.2 579.8 L677.5 571.3 L686.8 563.6 L697.7 559.7 L710 552 Z"/></clipPath>
</defs>
<g clip-path="url(#c2)">
<rect x="672" y="406" width="76" height="101" fill="rgb(0,158,12)"/>
<g filter="url(#bl2)">
<path d="M684 412 L694 410 L706 440 L698 444 Z" fill="rgb(30,185,30)"/>
<path d="M716 420 L726 418 L744 446 L734 450 Z" fill="rgb(30,180,30)"/>
<path d="M716 470 L726 468 L734 500 L722 503 Z" fill="rgb(0,140,30)"/>
<path d="M678 490 L698 486 L700 507 L676 507 Z" fill="rgb(0,140,40)"/>
<path d="M690 474 L700 472 L710 498 L700 500 Z" fill="rgb(25,175,25)"/>
</g>
<g filter="url(#bl1)">
<path d="M669 403 H679 Q676 420 675 450 L669 452 Z" fill="rgb(40,180,190)"/>
<path d="M669 473 L684.5 474 L678 482 L669 485 Z" fill="rgb(40,185,215)"/>
<path d="M710 403 H751 V419 Q740 417 734 414.5 Q722 411 714 408 Z" fill="rgb(80,210,225)"/>
<path d="M716 403 H751 V415 Q740 413 734 410.5 Q724 407 718 404 Z" fill="rgb(0,30,205)"/>
<path d="M751 453 L742 459 L734 470 L737 477 L741 488 L740 497 L734 510 H751 Z" fill="rgb(70,205,235)"/>
<path d="M751 458 L745 462 L738 470.5 L741 477 L745 488 L744 497 L739 510 H751 Z" fill="rgb(0,30,210)"/>
<path d="M687.5 447.5 L702.5 445 L705.5 452 L716 453.5 L718.5 458.6 L711 466.5 L695 465.5 L693 458 L687.5 454.5 Z" fill="rgb(215,235,0)"/>
<path d="M720 510 L730.5 497 L733 499 L725 510 Z" fill="rgb(200,225,0)"/>
</g>
<g filter="url(#bl1)">
<path d="M690 449 L702.5 447.5 L704.5 454 L715 455.5 L715.5 458.6 L710 463.5 L697 462.5 L695 456 L690 452.5 Z" fill="rgb(255,165,0)"/>
</g>
</g>
<rect x="672" y="461.8" width="76" height="1" fill="rgba(190,235,170,0.85)"/>
<rect x="709.8" y="406" width="1" height="101" fill="rgba(190,235,170,0.85)"/>
<!-- 3d panel -->
<g clip-path="url(#c3)">
<rect x="640" y="540" width="130" height="100" fill="rgb(25,150,25)"/>
<g filter="url(#bl2)">
<path d="M700 560 L740 562 L752 585 L715 598 Z" fill="rgb(40,175,40)"/>
<path d="M660 592 L695 598 L720 610 L685 618 Z" fill="rgb(15,135,35)"/>
<path d="M672 572 L690 568 L694 580 L676 586 Z" fill="rgb(50,180,50)"/>
</g>
<g filter="url(#bl1)">
<path d="M716 540 L742 556 L770 586 L767 591 L744 566 L721 549 Z" fill="rgb(90,200,215)"/>
<path d="M662 586 L674 578 L684 582 L678 590 L664 592 Z" fill="rgb(60,170,170)"/>
<path d="M688 625 Q700 612 714 607 L740 604 L726 618 L702 640 Z" fill="rgb(60,195,230)"/>
<path d="M694 628 Q705 622 715 620 L726 617 L702 640 Z" fill="rgb(20,40,230)"/>
<path d="M721 610 L738 606 L729 617 L721 618 Z" fill="rgb(0,30,210)"/>
<path d="M693 573 L707 576 L714 585 L717 596 L700 598 L693 588 Z" fill="rgb(195,230,0)"/>
<path d="M679 618 L687 622 L683 627 Z" fill="rgb(230,220,0)"/>
</g>
<g filter="url(#bl1)">
<path d="M696 577 L706 580 L711 585 L714.5 594 L701.5 594.5 L697.5 588 L700 583 Z" fill="rgb(255,150,0)"/>
</g>
</g>
</svg>

<!-- status bar -->
<div class="a" style="left:8px;top:658px;width:89px;height:1px;background:#a0a0a0"></div>
<div class="a" style="left:8px;top:659px;width:790px;height:24px;background:#f0f0f0"></div>
<div class="a" style="left:8px;top:683px;width:790px;height:1px;background:#a8b4c4"></div>
<div class="a" style="left:32px;top:661px;width:1px;height:20px;background:#d0d0d0"></div>
<div class="a" style="left:224px;top:661px;width:1px;height:20px;background:#d0d0d0"></div>
<div class="a" style="left:417px;top:661px;width:1px;height:20px;background:#d0d0d0"></div>
<div class="a" style="left:608px;top:661px;width:1px;height:20px;background:#d0d0d0"></div>
<svg class="a" style="left:8px;top:660px" width="26" height="22" viewBox="0 0 26 22">
<path d="M12 8.2 H6.5 L4.5 11.5 L6.5 14.5 H10.5 M7.5 11.5 H11.5" fill="none" stroke="#111" stroke-width="1.3"/>
<path d="M14 14.5 H19.5 L21.5 11.5 L19.5 8.2 H15.5 M18.5 11.5 H14.5" fill="none" stroke="#111" stroke-width="1.3"/>
<path d="M8.3 5.2 L9.6 6.5 M12.4 4.8 V6.6 M16.4 5 L15.2 6.4 M7.6 17.8 L8.8 16.4 M11.5 16.2 V18 M15.2 16.4 L16.5 17.8" stroke="#111" stroke-width="1.1"/>
</svg>
<div class="a stat" style="left:40px;letter-spacing:-0.3px">Scan line: 0,75 m</div>
<div class="a stat" style="left:231px">Impulse: 0,89 m</div>
<div class="a stat" style="left:423px">Depth: 1,20 m / 1,87 m</div>
<div class="a" style="left:731px;top:662px;width:19px;height:19px;border:1px solid #3c5870;background:#cce4f7;font-weight:bold;font-size:11px;text-align:center;line-height:19px;padding-left:1px">X</div>
<div class="a" style="left:754px;top:662px;width:19px;height:19px;border:1px solid #c8c8c8;background:#e2dfdb;font-weight:bold;font-size:11px;text-align:center;line-height:19px;padding-left:1px">Y</div>
<div class="a" style="left:777px;top:662px;width:19px;height:19px;border:1px solid #3c5870;background:#cce4f7;font-weight:bold;font-size:11px;text-align:center;line-height:19px;padding-left:1px">Z</div>
</body></html>
